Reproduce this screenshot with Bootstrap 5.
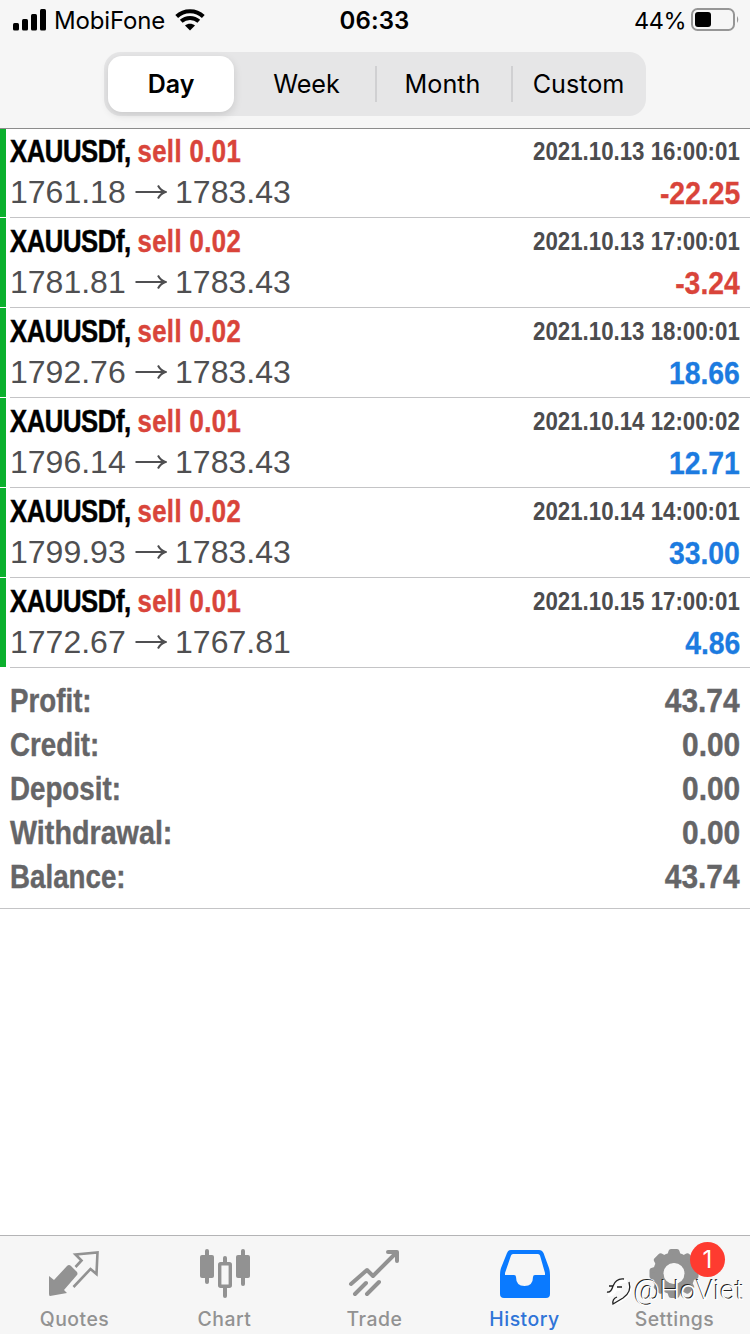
<!DOCTYPE html>
<html lang="en">
<head>
<meta charset="utf-8">
<meta name="viewport" content="width=device-width, initial-scale=1">
<title>History</title>
<link href="https://cdn.jsdelivr.net/npm/bootstrap@5.3.0/dist/css/bootstrap.min.css" rel="stylesheet">
<style>
body{font-family:Inter,"Liberation Sans",sans-serif;height:1334px;overflow:hidden;color:#000;background:#fff}
.top-area{height:129px;background:#f6f6f6;border-bottom:1px solid #8c8c8c}
.status-line{height:40px;font-size:24px;line-height:40px}
.status-line svg{display:block}
.status-line span{padding-top:2px}
.bars-icon{margin-left:13px}
.wifi{margin-left:10px}
.battery{margin-left:5px;margin-right:9px}
.carrier{margin-left:7px;letter-spacing:-.15px}
.power{font-size:23.5px;letter-spacing:-.5px}
.clock-text{font-weight:600;left:0;right:1px;letter-spacing:.1px}
.segments{width:542px;height:64px;margin-top:12px;margin-left:104px;padding:4px;border-radius:17px;background:#e6e6e7;font-size:25.2px;line-height:56px}
.seg.chosen{width:126px;background:#fff;border-radius:14px;font-weight:600;font-size:25px;box-shadow:0 3px 8px rgba(0,0,0,.13)}
.seg.week{width:137px}.seg.month{width:134px;padding-right:3px}.seg.custom{width:129px;padding-left:2px}
.seg-line{width:2px;height:36px;background:#d0d0d2}
.deal{height:90px;font-family:"Liberation Sans",sans-serif}
.side{width:6px;margin-bottom:1px;background:#0bb02d}
.deal-body{margin-left:4px;padding-right:10px;border-bottom:1px solid #c4c4c6}
.deal-top{height:46px;line-height:48px}
.deal-low{height:40px;line-height:38px}
.sq{display:inline-block;font-weight:700;white-space:pre;transform-origin:0 50%}
.sq-r{transform-origin:100% 50%}
.symbol{font-size:31px;letter-spacing:-.5px;transform:scaleX(.828);-webkit-text-stroke:.5px}
.symbol .c-red{letter-spacing:.5px}
.stamp{font-size:25.5px;line-height:46px;transform:scaleX(.873);color:#4c4c4e}
.price{height:36px;font-size:32px;color:#4f4f51}
.gain{font-size:31.5px;transform:scaleX(.9);-webkit-text-stroke:.3px}
.deal:first-child{height:89px}
.deal:first-child .deal-top{height:45px;line-height:46px}
.deal:first-child .stamp{line-height:44px}
.c-red{color:#d9443a}.c-blue{color:#1c7be0}
.arrow{width:49.4px;padding-left:9px}
.totals{height:241px;padding:11px 10px 0;border-bottom:1px solid #c4c4c6;font-family:"Liberation Sans",sans-serif;font-size:33px;color:#656567}
.totals .line{height:44px;line-height:44px}
.totals .sq{-webkit-text-stroke:.4px}
.tot-l{transform:scaleX(.84)}.tot-l.wide{transform:scaleX(.87)}.tot-r{transform:scaleX(.905)}
.tabs-bar{height:99px;border-top:1px solid #b4b4b6;background:#f6f6f6;color:#929292;font-size:19.4px}
.tab{width:150px;padding-top:10px}
.tab svg{display:block;flex-shrink:0;overflow:visible}
.tab-name{margin-top:3px;margin-right:1px;line-height:28px;letter-spacing:.5px;font-weight:500}
.tab.now{color:#0a7aff}.tab.now .tab-name{color:#2f74d8}
.count{left:690px;top:1242px;width:35px;height:35px;line-height:35px;border-radius:50%;background:#fe3b30;color:#fff;font-size:24px}
.sign{left:606px;top:1274px;height:34px;font-family:Roboto,sans-serif;font-weight:300;font-size:28.5px;line-height:34px;color:#fff;text-shadow:-1px -1px 0 #222}
</style>
</head>
<body class="d-flex flex-column position-relative">
<header class="top-area flex-shrink-0">
  <div class="status-line d-flex align-items-center position-relative">
    <svg class="bars-icon" width="34" height="22" viewBox="0 0 34 22"><rect x="0" y="14" width="6" height="7.500" rx="1.500"/><rect x="9" y="10" width="6" height="11.500" rx="1.500"/><rect x="18" y="5" width="6" height="16.500" rx="1.500"/><rect x="27" y="0" width="6" height="21.500" rx="1.500"/></svg>
    <span class="carrier">MobiFone</span>
    <svg class="wifi" width="30" height="22" viewBox="0 0 30 22" fill="none" stroke="#000" stroke-width="4"><path d="M1.700 7.500C9 0.500 21 0.500 28.300 7.500"/><path d="M6.200 12.300C11 7.800 19 7.800 23.800 12.300" /><path d="M10 16.600C12.800 14.100 17.200 14.100 20 16.600L15 21.600Z" fill="#000" stroke="none"/></svg>
    <span class="clock-text position-absolute text-center">06:33</span>
    <span class="power ms-auto">44%</span>
    <svg class="battery" width="50" height="24" viewBox="0 0 50 24"><rect x="1" y="1" width="42" height="21" rx="5.500" fill="none" stroke="#969696" stroke-width="2"/><rect x="4" y="4" width="16" height="15" rx="3" fill="#000"/><path d="M46 8Q48.500 11.500 46 15Z" fill="#969696"/></svg>
  </div>
  <div class="segments d-flex align-items-center text-center">
    <div class="seg chosen">Day</div><div class="seg week ms-auto">Week</div><div class="seg-line"></div><div class="seg month">Month</div><div class="seg-line"></div><div class="seg custom">Custom</div>
  </div>
</header>
<main class="flex-grow-1">
  <div id="deals"></div>
  <section class="totals">
    <div class="line d-flex justify-content-between"><span class="sq tot-l">Profit:</span><span class="sq sq-r tot-r">43.74</span></div>
    <div class="line d-flex justify-content-between"><span class="sq tot-l">Credit:</span><span class="sq sq-r tot-r">0.00</span></div>
    <div class="line d-flex justify-content-between"><span class="sq tot-l">Deposit:</span><span class="sq sq-r tot-r">0.00</span></div>
    <div class="line d-flex justify-content-between"><span class="sq tot-l wide">Withdrawal:</span><span class="sq sq-r tot-r">0.00</span></div>
    <div class="line d-flex justify-content-between"><span class="sq tot-l">Balance:</span><span class="sq sq-r tot-r">43.74</span></div>
  </section>
</main>
<nav class="tabs-bar d-flex flex-shrink-0">
  <div class="tab d-flex flex-column align-items-center"><svg width="52" height="56" viewBox="49 1246 52 56"><path d="M49 1276L54 1280 67 1266Q69 1264 71 1266L77 1272Q78 1274 77 1275L64 1290 67 1293 50 1296Q49 1296 49 1294Z" fill="currentColor"/><path d="M75.500 1267L81.500 1260.500 75.500 1254.500 97.500 1252.500 96.500 1274 90.500 1269 73.500 1287" fill="none" stroke="currentColor" stroke-width="2.600"/></svg><div class="tab-name">Quotes</div></div>
  <div class="tab d-flex flex-column align-items-center"><svg width="52" height="56" viewBox="199 1246 52 56"><g fill="currentColor"><rect x="205" y="1249" width="4" height="35" rx="2"/><rect x="200" y="1255" width="14" height="23" rx="2"/><rect x="241" y="1249" width="4" height="37" rx="2"/><rect x="236" y="1255" width="14" height="23" rx="2"/><rect x="223" y="1256" width="4" height="8" rx="2"/><rect x="223" y="1286" width="4" height="12" rx="2"/></g><rect x="219.700" y="1263.700" width="10.600" height="22.600" rx="1" fill="none" stroke="currentColor" stroke-width="3.400"/></svg><div class="tab-name">Chart</div></div>
  <div class="tab d-flex flex-column align-items-center"><svg width="52" height="56" viewBox="349 1246 52 56" fill="none" stroke="currentColor" stroke-width="4" stroke-linecap="round" stroke-linejoin="round"><path d="M351 1284L367 1270 373 1276 396 1253M388 1252H397V1261M355 1294L366 1283M367 1294L379 1282"/></svg><div class="tab-name">Trade</div></div>
  <div class="tab now d-flex flex-column align-items-center"><svg width="52" height="56" viewBox="499 1246 52 56"><path fill="currentColor" fill-rule="evenodd" d="M511 1250H539Q542 1250 543.500 1253L549 1268Q550 1271 550 1275V1294Q550 1298 546 1298H504Q500 1298 500 1294V1275Q500 1271 501 1268L507 1253Q508 1250 511 1250ZM513 1254Q511.500 1254 511 1255.500L505 1273V1275H514Q516 1275 516 1277Q516 1286 524.500 1286Q533 1286 533 1277Q533 1275 535 1275H545V1273L540 1255.500Q539.500 1254 538 1254Z"/></svg><div class="tab-name">History</div></div>
  <div class="tab d-flex flex-column align-items-center"><svg width="52" height="56" viewBox="649 1246 52 56"><circle cx="674" cy="1273.500" r="15.500" fill="none" stroke="currentColor" stroke-width="11"/><g stroke="currentColor" stroke-width="5" stroke-linejoin="round" fill="currentColor"><path d="M671 1251.500H677L679 1258H669ZM671 1295.500H677L679 1289H669ZM652 1270.500V1276.500L658.500 1278.500V1268.500ZM696 1270.500V1276.500L689.500 1278.500V1268.500ZM656.300 1260L660.500 1255.800 666.500 1259 659.500 1266ZM691.700 1260L687.500 1255.800 681.500 1259 688.500 1266ZM656.300 1287L660.500 1291.200 666.500 1288 659.500 1281ZM691.700 1287L687.500 1291.200 681.500 1288 688.500 1281Z"/></g><circle cx="674" cy="1273.500" r="10.500" fill="#f6f6f6"/></svg><div class="tab-name">Settings</div></div>
</nav>
<div class="count position-absolute text-center">1</div>
<div class="sign position-absolute d-flex align-items-center"><svg width="28" height="34" viewBox="606 1274 28 34" fill="none"><path stroke="#fff" stroke-width="3.500" d="M608 1295Q614 1295 616 1288Q618 1281 627 1281M613 1289H621M629 1284Q632 1293 624 1298L616 1303"/><path stroke="#222" stroke-width="1.300" d="M607 1292Q611 1293 613 1286Q616 1278 624 1279M609 1286H613M617 1287H622M629 1282Q632 1292 623 1298L613 1304Q612 1299 617 1297"/></svg><span>@HoViet</span></div>
<script src="https://cdn.jsdelivr.net/npm/bootstrap@5.3.0/dist/js/bootstrap.bundle.min.js"></script>
<script>
const deals=[
 ['0.01','1761.18','1783.43','2021.10.13 16:00:01','-22.25'],
 ['0.02','1781.81','1783.43','2021.10.13 17:00:01','-3.24'],
 ['0.02','1792.76','1783.43','2021.10.13 18:00:01','18.66'],
 ['0.01','1796.14','1783.43','2021.10.14 12:00:02','12.71'],
 ['0.02','1799.93','1783.43','2021.10.14 14:00:01','33.00'],
 ['0.01','1772.67','1767.81','2021.10.15 17:00:01','4.86']];
document.getElementById('deals').innerHTML=deals.map(([v,a,b,t,p])=>`
<div class="deal d-flex"><div class="side"></div><div class="deal-body flex-grow-1">
<div class="deal-top d-flex justify-content-between"><span class="sq symbol">XAUUSDf, <span class="c-red">sell ${v}</span></span><span class="sq sq-r stamp">${t}</span></div>
<div class="deal-low d-flex justify-content-between"><span class="price d-flex align-items-center">${a}<span class="arrow d-flex"><svg width="32" height="16" viewBox="0 0 32 16" fill="none" stroke="currentColor" stroke-width="2"><path d="M0.500 8H30M23 1.500Q25.500 6.500 30.500 8Q25.500 9.500 23 14.500"/></svg></span>${b}</span><span class="sq sq-r gain ${p[0]==='-'?'c-red':'c-blue'}">${p}</span></div>
</div></div>`).join('');
</script>
</body>
</html>
